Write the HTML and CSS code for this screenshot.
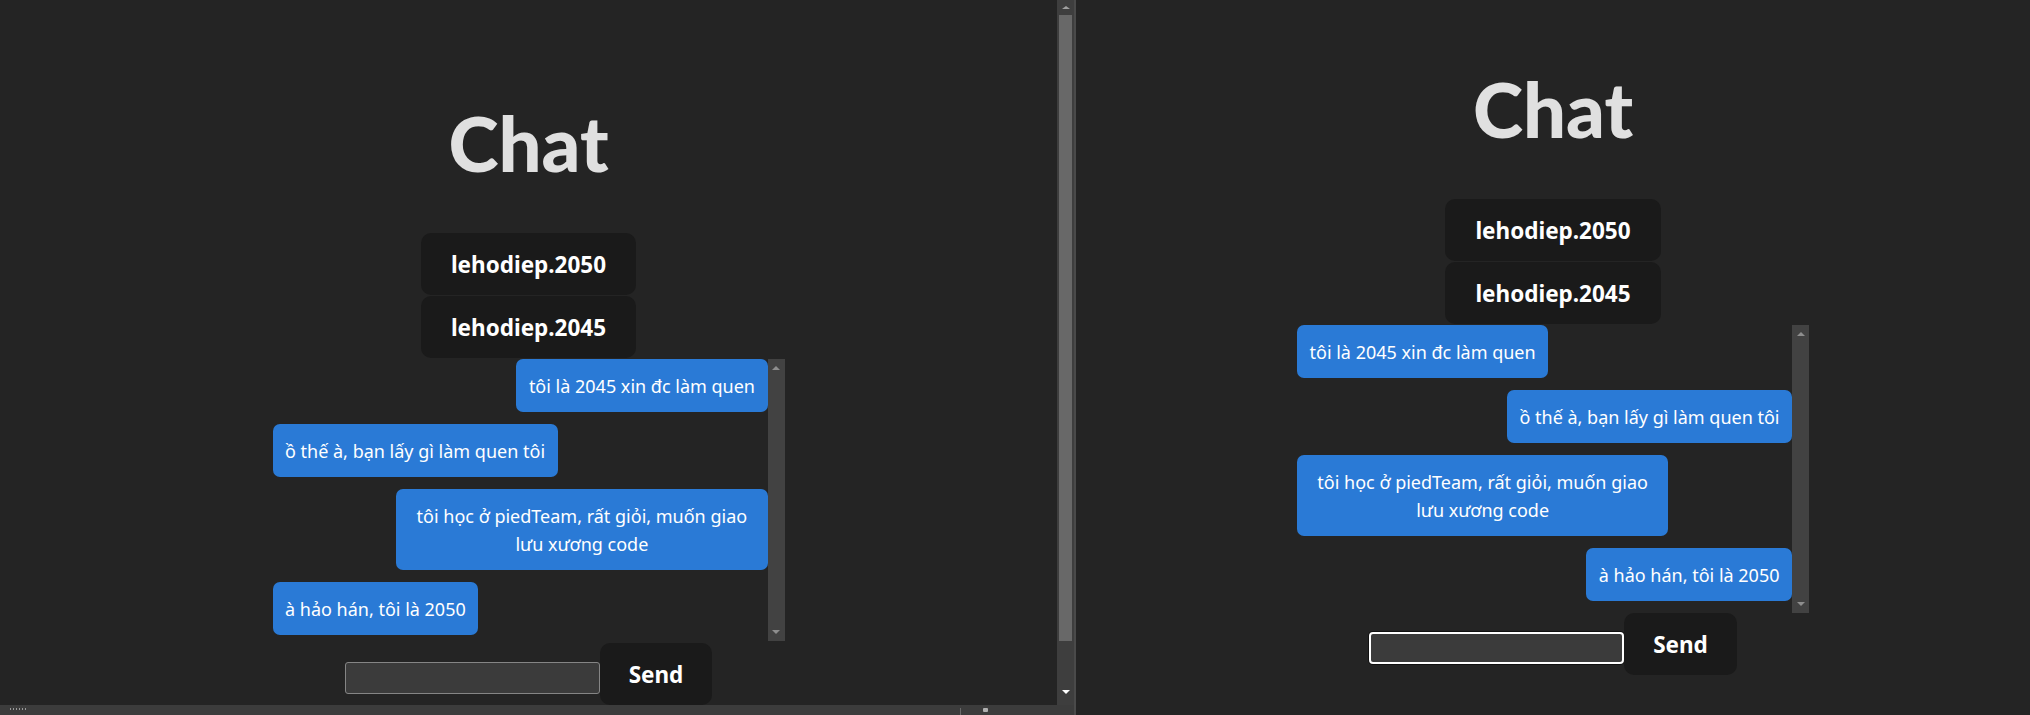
FILE: index.html
```html
<!DOCTYPE html>
<html lang="vi">
<head>
<meta charset="utf-8">
<title>Chat</title>
<link rel="stylesheet" href="styles.css">
</head>
<body>
<div class="window">
  <div class="left-col">
    <div class="left-main">
      <main class="app app--left">
        <h1 class="title">Chat</h1>
        <div class="users">
          <button class="user-btn">lehodiep.2050</button>
          <button class="user-btn">lehodiep.2045</button>
        </div>
        <div class="chat">
          <div class="messages">
            <div class="bubble bubble--right">tôi là 2045 xin đc làm quen</div>
            <div class="bubble">ồ thế à, bạn lấy gì làm quen tôi</div>
            <div class="bubble bubble--right">tôi học ở piedTeam, rất giỏi, muốn giao lưu xương code</div>
            <div class="bubble">à hảo hán, tôi là 2050</div>
          </div>
          <div class="mini-scroll"><span class="tri-up"></span><span class="tri-down"></span></div>
        </div>
        <div class="composer">
          <input class="composer-input" type="text">
          <button class="send-btn">Send</button>
        </div>
      </main>
      <div class="page-scroll">
        <div class="page-scroll-btn"><span class="tri-up tri-up--page"></span></div>
        <div class="page-scroll-thumb"></div>
        <div class="page-scroll-rest"></div>
        <div class="page-scroll-btn page-scroll-btn--down"><span class="tri-down tri-down--page"></span></div>
      </div>
    </div>
    <div class="statusbar">
      <span class="grip"></span>
      <span class="status-spacer"></span>
      <span class="status-sep"></span>
      <span class="status-icon"></span>
    </div>
  </div>
  <div class="divider"></div>
  <main class="app app--right">
    <h1 class="title">Chat</h1>
    <div class="users">
      <button class="user-btn">lehodiep.2050</button>
      <button class="user-btn">lehodiep.2045</button>
    </div>
    <div class="chat">
      <div class="messages">
        <div class="bubble">tôi là 2045 xin đc làm quen</div>
        <div class="bubble bubble--right">ồ thế à, bạn lấy gì làm quen tôi</div>
        <div class="bubble">tôi học ở piedTeam, rất giỏi, muốn giao lưu xương code</div>
        <div class="bubble bubble--right">à hảo hán, tôi là 2050</div>
      </div>
      <div class="mini-scroll"><span class="tri-up"></span><span class="tri-down"></span></div>
    </div>
    <div class="composer composer--tight">
      <input class="composer-input composer-input--focus" type="text">
      <button class="send-btn">Send</button>
    </div>
  </main>
</div>
</body>
</html>
```

FILE: styles.css
```css
* { box-sizing: border-box; }

html, body {
  margin: 0;
  padding: 0;
  background: #242424;
  width: 2030px;
  height: 715px;
  overflow: hidden;
}

body {
  font-family: "Noto Sans", "Open Sans", sans-serif;
  color: rgba(255, 255, 255, 0.87);
}

.window {
  display: flex;
  width: 2030px;
  height: 715px;
}

.left-col {
  width: 1074px;
  display: flex;
  flex-direction: column;
}

.left-main {
  display: flex;
  height: 705px;
  overflow: hidden;
}

.app {
  display: flex;
  flex-direction: column;
  align-items: center;
  background: #242424;
  overflow: hidden;
}

.app--left {
  width: 1057px;
  height: 705px;
  padding-top: 100px;
}

.app--right {
  width: 954px;
  height: 715px;
  padding-top: 66px;
}

.title {
  margin: 0 0 47px;
  font-family: Lato, "Noto Sans", sans-serif;
  font-weight: 900;
  font-size: 76px;
  line-height: 86px;
  color: #e0e0e0;
}

.users {
  display: flex;
  flex-direction: column;
  align-items: center;
  gap: 1px;
}

.user-btn,
.send-btn {
  font-family: "Noto Sans", sans-serif;
  font-weight: 700;
  font-size: 22.5px;
  color: #fff;
  background: #1a1a1a;
  border: 1px solid transparent;
  border-radius: 10px;
  height: 62px;
  padding: 0 29px;
  cursor: pointer;
}

.chat {
  display: flex;
  width: 512px;
  height: 288px;
  margin-top: 1px;
}

.messages {
  flex: 1;
  display: flex;
  flex-direction: column;
  align-items: flex-start;
  gap: 12px;
}

.bubble {
  max-width: 75%;
  background: #2a7ad6;
  color: #fff;
  font-size: 18px;
  line-height: 28px;
  padding: 12.5px 12.5px;
  border-radius: 7px;
  text-align: center;
}

.bubble--right {
  align-self: flex-end;
}

.mini-scroll {
  width: 17px;
  background: #424242;
  display: flex;
  flex-direction: column;
  justify-content: space-between;
  align-items: center;
  padding: 7px 0 7px;
}

.tri-up {
  width: 0;
  height: 0;
  border-left: 4px solid transparent;
  border-right: 4px solid transparent;
  border-bottom: 4px solid #8e8e8e;
}

.tri-down {
  width: 0;
  height: 0;
  border-left: 4px solid transparent;
  border-right: 4px solid transparent;
  border-top: 4px solid #8e8e8e;
}

.composer {
  display: flex;
  align-items: flex-start;
  margin-top: 2px;
}

.composer--tight {
  margin-top: 0;
}

.composer-input {
  width: 255px;
  height: 32px;
  margin-top: 19px;
  background: #3b3b3b;
  border: 1px solid #858585;
  border-radius: 3px;
  outline: none;
  color: #fff;
  font-size: 16px;
}

.composer-input--focus {
  border: 2px solid #ffffff;
  border-radius: 4px;
  box-shadow: 0 0 0 1px #111;
}

.send-btn {
  padding: 0 28px;
}

.page-scroll {
  width: 17px;
  height: 705px;
  background: #3e3e3e;
  display: flex;
  flex-direction: column;
  align-items: center;
}

.page-scroll-btn {
  height: 15px;
  width: 17px;
  display: flex;
  align-items: center;
  justify-content: center;
}

.page-scroll-btn--down {
  height: 17px;
  align-items: flex-start;
  padding-top: 2px;
}

.tri-up--page {
  border-bottom-color: #a0a0a0;
  border-bottom-width: 3px;
}

.tri-down--page {
  border-top-color: #ffffff;
}

.page-scroll-thumb {
  width: 13px;
  height: 626px;
  background: #686868;
}

.page-scroll-rest {
  flex: 1;
}

.statusbar {
  height: 10px;
  background: #3c3c3c;
  display: flex;
  align-items: flex-start;
  padding: 3px 0 0 10px;
}

.grip {
  width: 18px;
  height: 2px;
  background-image: repeating-linear-gradient(90deg, #9a9a9a 0 1px, transparent 1px 3px);
}

.status-spacer {
  flex: 0 0 932px;
}

.status-sep {
  width: 1px;
  height: 7px;
  background: #6a6a6a;
}

.status-icon {
  width: 5px;
  height: 4px;
  margin-left: 22px;
  background: #b0b0b0;
  border-radius: 1px;
}

.divider {
  width: 2px;
  height: 715px;
  background: #4a4a4a;
}
```
